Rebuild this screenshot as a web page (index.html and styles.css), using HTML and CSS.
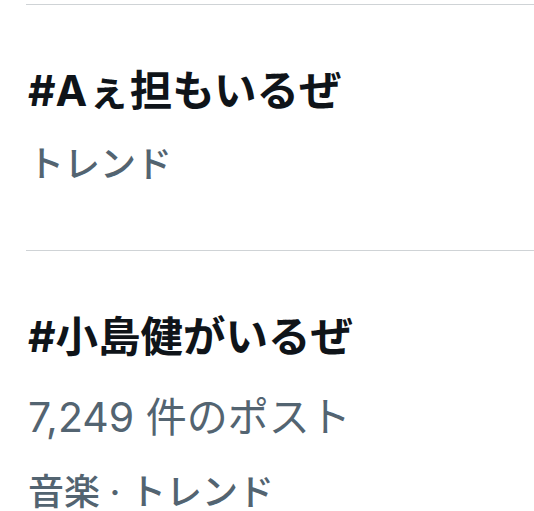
FILE: index.html
```html
<!DOCTYPE html>
<html lang="ja">
<head>
    <meta charset="UTF-8">
    <meta name="viewport" content="width=device-width, initial-scale=1.0">
    <title>トレンド</title>
    <link rel="stylesheet" href="styles.css">
</head>
<body>

    <div class="trend-list">
        <div class="trend-item">
            <div class="trend-title">#Aぇ担もいるぜ</div>
            <div class="trend-meta">トレンド</div>
        </div>

        <div class="trend-item">
            <div class="trend-title">#小島健がいるぜ</div>
            <div class="trend-count">7,249 件のポスト</div>
            <div class="trend-meta">音楽 · トレンド</div>
        </div>
    </div>

</body>
</html>
```

FILE: styles.css
```css
body {
    margin: 0;
    background-color: #fff;
    font-family: Inter, "Noto Sans CJK JP", sans-serif;
    overflow: hidden;
}

.trend-list {
    padding-top: 4px;
    margin-left: 26px;
}

.trend-item {
    border-top: 1px solid #cfd3d6;
    padding: 50px 0 51px 2px;
}

.trend-title {
    font-size: 42.5px;
    font-weight: 700;
    line-height: 72px;
    color: #0f1419;
}

.trend-count {
    margin-top: 4px;
    font-size: 41px;
    font-weight: 400;
    line-height: 80px;
    color: #536471;
}

.trend-meta {
    margin-top: 2px;
    font-size: 36px;
    font-weight: 500;
    line-height: 70px;
    color: #536471;
}

.trend-count + .trend-meta {
    margin-top: 16px;
    line-height: 38px;
}
```
